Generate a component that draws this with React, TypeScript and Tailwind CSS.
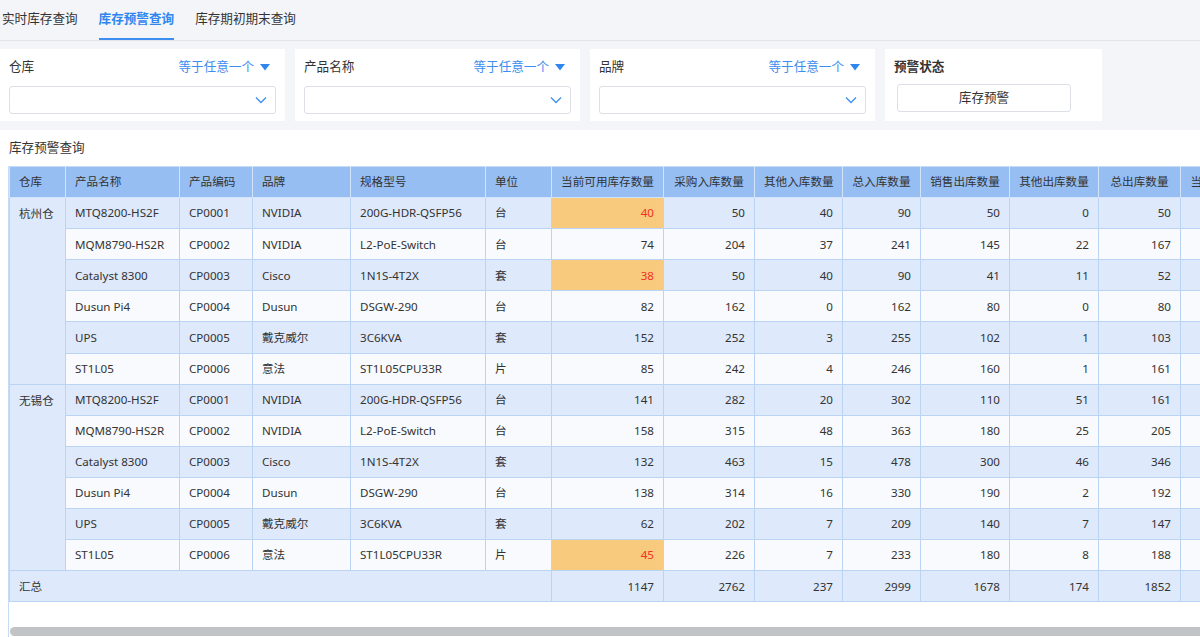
import React from 'react';

type Row = {
  name: string;
  code: string;
  brand: string;
  spec: string;
  unit: string;
  avail: number;
  warn?: boolean;
  buyIn: number;
  otherIn: number;
  totalIn: number;
  saleOut: number;
  otherOut: number;
  totalOut: number;
};

const hz: Row[] = [
  { name: 'MTQ8200-HS2F', code: 'CP0001', brand: 'NVIDIA', spec: '200G-HDR-QSFP56', unit: '台', avail: 40, warn: true, buyIn: 50, otherIn: 40, totalIn: 90, saleOut: 50, otherOut: 0, totalOut: 50 },
  { name: 'MQM8790-HS2R', code: 'CP0002', brand: 'NVIDIA', spec: 'L2-PoE-Switch', unit: '台', avail: 74, buyIn: 204, otherIn: 37, totalIn: 241, saleOut: 145, otherOut: 22, totalOut: 167 },
  { name: 'Catalyst 8300', code: 'CP0003', brand: 'Cisco', spec: '1N1S-4T2X', unit: '套', avail: 38, warn: true, buyIn: 50, otherIn: 40, totalIn: 90, saleOut: 41, otherOut: 11, totalOut: 52 },
  { name: 'Dusun Pi4', code: 'CP0004', brand: 'Dusun', spec: 'DSGW-290', unit: '台', avail: 82, buyIn: 162, otherIn: 0, totalIn: 162, saleOut: 80, otherOut: 0, totalOut: 80 },
  { name: 'UPS', code: 'CP0005', brand: '戴克威尔', spec: '3C6KVA', unit: '套', avail: 152, buyIn: 252, otherIn: 3, totalIn: 255, saleOut: 102, otherOut: 1, totalOut: 103 },
  { name: 'ST1L05', code: 'CP0006', brand: '意法', spec: 'ST1L05CPU33R', unit: '片', avail: 85, buyIn: 242, otherIn: 4, totalIn: 246, saleOut: 160, otherOut: 1, totalOut: 161 },
];

const wx: Row[] = [
  { name: 'MTQ8200-HS2F', code: 'CP0001', brand: 'NVIDIA', spec: '200G-HDR-QSFP56', unit: '台', avail: 141, buyIn: 282, otherIn: 20, totalIn: 302, saleOut: 110, otherOut: 51, totalOut: 161 },
  { name: 'MQM8790-HS2R', code: 'CP0002', brand: 'NVIDIA', spec: 'L2-PoE-Switch', unit: '台', avail: 158, buyIn: 315, otherIn: 48, totalIn: 363, saleOut: 180, otherOut: 25, totalOut: 205 },
  { name: 'Catalyst 8300', code: 'CP0003', brand: 'Cisco', spec: '1N1S-4T2X', unit: '套', avail: 132, buyIn: 463, otherIn: 15, totalIn: 478, saleOut: 300, otherOut: 46, totalOut: 346 },
  { name: 'Dusun Pi4', code: 'CP0004', brand: 'Dusun', spec: 'DSGW-290', unit: '台', avail: 138, buyIn: 314, otherIn: 16, totalIn: 330, saleOut: 190, otherOut: 2, totalOut: 192 },
  { name: 'UPS', code: 'CP0005', brand: '戴克威尔', spec: '3C6KVA', unit: '套', avail: 62, buyIn: 202, otherIn: 7, totalIn: 209, saleOut: 140, otherOut: 7, totalOut: 147 },
  { name: 'ST1L05', code: 'CP0006', brand: '意法', spec: 'ST1L05CPU33R', unit: '片', avail: 45, warn: true, buyIn: 226, otherIn: 7, totalIn: 233, saleOut: 180, otherOut: 8, totalOut: 188 },
];

const groups = [
  { wh: '杭州仓', rows: hz },
  { wh: '无锡仓', rows: wx },
];

const headers = ['仓库', '产品名称', '产品编码', '品牌', '规格型号', '单位', '当前可用库存数量', '采购入库数量', '其他入库数量', '总入库数量', '销售出库数量', '其他出库数量', '总出库数量', '当前实际库存数量', '预警值'];

const Chevron = () => (
  <svg width="12" height="8" viewBox="0 0 12 8" fill="none">
    <path d="M1 1.5 6 6.5 11 1.5" stroke="#3d8ef0" strokeWidth="1.3" />
  </svg>
);

const Caret = () => (
  <svg width="10" height="7" viewBox="0 0 10 7">
    <path d="M0 0h10L5 6.5z" fill="#2f86ef" />
  </svg>
);

const FilterCard = ({ label, width }: { label: string; width: string }) => (
  <div className={`${width} bg-white pl-[9px] pr-[9px] pt-[9px] pb-[7px]`}>
    <div className="flex items-center justify-between h-[19px] pr-[6px]">
      <span className="text-[12.6px] text-[#333]">{label}</span>
      <span className="flex items-center gap-[6px] text-[12.6px] text-[#3d8ef0]">
        等于任意一个
        <Caret />
      </span>
    </div>
    <div className="mt-[9px] h-[28px] border border-[#dcdfe6] rounded-[3px] flex items-center justify-end pr-[8px]">
      <Chevron />
    </div>
  </div>
);

const td = 'border border-[#bcd4f4] px-[9px] text-[11.6px] text-[#333] whitespace-nowrap';

const App: React.FC = () => {
  let idx = 0;
  return (
    <div className="w-[1200px] h-[637px] overflow-hidden bg-[#f3f5f9] font-['Noto_Sans','Noto_Sans_CJK_SC',sans-serif]">
      {/* tabs */}
      <div className="h-[41px] flex items-end gap-[21px] pl-[2px] border-b border-[#e1e5ec]">
        <div className="h-[40px] flex items-center text-[12.6px] text-[#333] pb-[2px]">实时库存查询</div>
        <div className="h-[40px] flex items-center text-[12.6px] font-bold text-[#2f86ef] border-b-2 border-[#3d8ef0]">库存预警查询</div>
        <div className="h-[40px] flex items-center text-[12.6px] text-[#333] pb-[2px]">库存期初期末查询</div>
      </div>

      {/* filters */}
      <div className="flex gap-[10px] mt-[8px]">
        <FilterCard label="仓库" width="w-[285px]" />
        <FilterCard label="产品名称" width="w-[285px]" />
        <FilterCard label="品牌" width="w-[285px]" />
        <div className="w-[217px] bg-white pl-[9px] pt-[9px] pb-[7px]">
          <div className="h-[19px] flex items-center text-[12.6px] font-bold text-[#333]">预警状态</div>
          <div className="mt-[7px] ml-[3px] w-[174px] h-[28px] border border-[#dcdfe6] rounded-[3px] flex items-center justify-center text-[12.6px] text-[#333]">
            库存预警
          </div>
        </div>
      </div>

      {/* table section */}
      <div className="mt-[9px] bg-white h-[507px] pl-[8px] flex flex-col">
        <div className="h-[36px] flex items-center pl-[1px] text-[12.6px] text-[#333]">库存预警查询</div>
        <div className="flex-1 border-l border-[#c6dbf6] overflow-hidden relative">
          <table className="table-fixed border-collapse w-[1400px]">
            <colgroup>
              <col className="w-[56px]" />
              <col className="w-[114px]" />
              <col className="w-[73px]" />
              <col className="w-[98px]" />
              <col className="w-[135px]" />
              <col className="w-[66px]" />
              <col className="w-[112px]" />
              <col className="w-[91px]" />
              <col className="w-[88px]" />
              <col className="w-[78px]" />
              <col className="w-[89px]" />
              <col className="w-[89px]" />
              <col className="w-[82px]" />
              <col className="w-[113px]" />
              <col className="w-[116px]" />
            </colgroup>
            <thead>
              <tr className="h-[31.1px] bg-[#96bef3]">
                {headers.map((h, i) => (
                  <th
                    key={h}
                    className={`border border-[#d3e3f9] border-t-[#c6dbf6] px-[9px] text-[11.6px] font-normal text-[#333] whitespace-nowrap ${i >= 6 ? 'text-center' : 'text-left'}`}
                  >
                    {h}
                  </th>
                ))}
              </tr>
            </thead>
            <tbody>
              {groups.map((g) =>
                g.rows.map((r, i) => {
                  const bg = idx++ % 2 === 0 ? 'bg-[#dee9fb]' : 'bg-[#f8fafd]';
                  return (
                    <tr key={g.wh + r.code} className={`h-[31.1px] ${bg}`}>
                      {i === 0 && (
                        <td rowSpan={6} className={`${td} bg-[#dee9fb] align-top pt-[7px]`}>
                          {g.wh}
                        </td>
                      )}
                      <td className={td}>{r.name}</td>
                      <td className={td}>{r.code}</td>
                      <td className={td}>{r.brand}</td>
                      <td className={td}>{r.spec}</td>
                      <td className={td}>{r.unit}</td>
                      <td className={`${td} text-right ${r.warn ? 'bg-[#f8ca7e] !text-[#f2321f]' : ''}`}>{r.avail}</td>
                      <td className={`${td} text-right`}>{r.buyIn}</td>
                      <td className={`${td} text-right`}>{r.otherIn}</td>
                      <td className={`${td} text-right`}>{r.totalIn}</td>
                      <td className={`${td} text-right`}>{r.saleOut}</td>
                      <td className={`${td} text-right`}>{r.otherOut}</td>
                      <td className={`${td} text-right`}>{r.totalOut}</td>
                      <td className={`${td} text-right`}>{r.totalIn - r.totalOut}</td>
                      <td className={`${td} text-right`}>50</td>
                    </tr>
                  );
                })
              )}
              <tr className="h-[31.1px] bg-[#dee9fb]">
                <td colSpan={6} className={td}>汇总</td>
                <td className={`${td} text-right`}>1147</td>
                <td className={`${td} text-right`}>2762</td>
                <td className={`${td} text-right`}>237</td>
                <td className={`${td} text-right`}>2999</td>
                <td className={`${td} text-right`}>1678</td>
                <td className={`${td} text-right`}>174</td>
                <td className={`${td} text-right`}>1852</td>
                <td className={`${td} text-right`}>1147</td>
                <td className={`${td} text-right`}></td>
              </tr>
            </tbody>
          </table>
          <div className="absolute left-[1px] right-0 bottom-[1px] h-[9px] rounded-l-full bg-[#c1c3c7]" />
        </div>
      </div>
    </div>
  );
};

export default App;
